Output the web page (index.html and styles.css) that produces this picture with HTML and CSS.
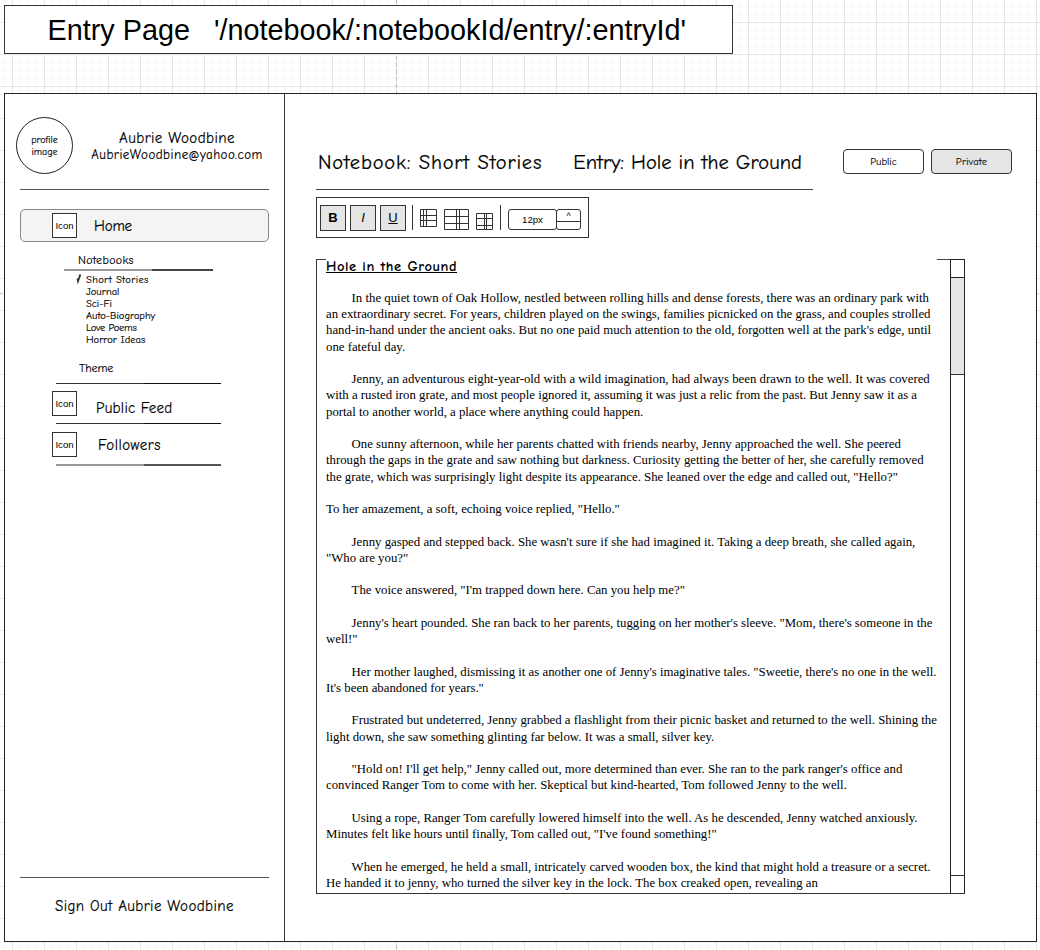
FILE: index.html
```html
<!DOCTYPE html>
<html lang="en">
<head>
<meta charset="utf-8">
<title>Entry Page</title>
<link rel="stylesheet" href="styles.css">
</head>
<body>
<div class="canvas">
<header class="route"><span class="route-name">Entry Page</span><span>'/notebook/:notebookId/entry/:entryId'</span></header>
<div class="frame">
  <aside class="sidebar">
    <div class="profile">
      <div class="avatar">profile<br>image</div>
      <div class="who"><div class="name">Aubrie Woodbine</div><div class="email">AubrieWoodbine@yahoo.com</div></div>
    </div>
    <div class="rule"></div>
    <div class="home"><span class="icon">Icon</span><span class="label label-home">Home</span></div>
    <div class="sub sub-notebooks">Notebooks</div>
    <div class="split split-notebooks"></div>
    <ul class="books">
      <li class="current"><svg class="tick" width="6" height="11" viewBox="0 0 6 11"><path d="M1.4 5.5L2 8.2L4.4 1.4" fill="none" stroke="#333" stroke-width="1.8"/></svg><span class="w-short">Short Stories</span></li>
      <li>Journal</li><li>Sci-Fi</li><li>Auto-Biography</li><li class="w-love">Love Poems</li><li>Horror Ideas</li>
    </ul>
    <div class="sub sub-theme">Theme</div>
    <div class="split"></div>
    <div class="item item-feed"><span class="icon">Icon</span><span class="label label-feed">Public Feed</span></div>
    <div class="split"></div>
    <div class="item item-followers"><span class="icon">Icon</span><span class="label label-followers">Followers</span></div>
    <div class="split split-soft"></div>
    <div class="rule rule-bottom"></div>
    <div class="signout">Sign Out Aubrie Woodbine</div>
  </aside>
  <main class="main">
    <div class="head">
      <div class="titles"><span class="t-book">Notebook: Short Stories</span><span class="t-entry">Entry: Hole in the Ground</span></div>
      <div class="visibility"><button class="vis">Public</button><button class="vis vis-on">Private</button></div>
    </div>
    <div class="toolbar">
      <button class="tool"><b>B</b></button><button class="tool"><i>I</i></button><button class="tool"><u>U</u></button>
      <span class="sep sep-a"></span>
      <svg class="grid-a" width="18" height="18" viewBox="0 0 18 18"><path d="M.5 .5H16.5V17.5H.5ZM3.5 .5V17.5M6.5 .5V17.5M.5 6.5H17M.5 11.5H17"/></svg>
      <svg class="grid-b" width="26" height="22" viewBox="0 0 26 22"><path d="M.5 .5H24.5V20.5H.5ZM12.5 .5V20.5M15.5 .5V20.5M.5 7.5H24.5M.5 14.5H24.5"/></svg>
      <svg class="grid-c" width="18" height="18" viewBox="0 0 18 18"><path d="M.5 .5H16.5V16.5H.5ZM8.5 .5V16.5M10.5 .5V16.5M.5 5.5H16.5M.5 12.5H16.5"/></svg>
      <span class="sep sep-b"></span>
      <span class="size">12px</span><span class="stepper"><span class="up">^</span><span class="down"></span></span>
    </div>
    <section class="editor">
      <article class="story">
        <h1>Hole in the Ground</h1>
        <p>In the quiet town of Oak Hollow, nestled between rolling hills and dense forests, there was an ordinary park with<br>an extraordinary secret. For years, children played on the swings, families picnicked on the grass, and couples strolled<br>hand-in-hand under the ancient oaks. But no one paid much attention to the old, forgotten well at the park's edge, until<br>one fateful day.</p>
        <p>Jenny, an adventurous eight-year-old with a wild imagination, had always been drawn to the well. It was covered<br>with a rusted iron grate, and most people ignored it, assuming it was just a relic from the past. But Jenny saw it as a<br>portal to another world, a place where anything could happen.</p>
        <p>One sunny afternoon, while her parents chatted with friends nearby, Jenny approached the well. She peered<br>through the gaps in the grate and saw nothing but darkness. Curiosity getting the better of her, she carefully removed<br>the grate, which was surprisingly light despite its appearance. She leaned over the edge and called out, "Hello?"</p>
        <p class="flush">To her amazement, a soft, echoing voice replied, "Hello."</p>
        <p>Jenny gasped and stepped back. She wasn't sure if she had imagined it. Taking a deep breath, she called again,<br>"Who are you?"</p>
        <p>The voice answered, "I'm trapped down here. Can you help me?"</p>
        <p>Jenny's heart pounded. She ran back to her parents, tugging on her mother's sleeve. "Mom, there's someone in the<br>well!"</p>
        <p>Her mother laughed, dismissing it as another one of Jenny's imaginative tales. "Sweetie, there's no one in the well.<br>It's been abandoned for years."</p>
        <p>Frustrated but undeterred, Jenny grabbed a flashlight from their picnic basket and returned to the well. Shining the<br>light down, she saw something glinting far below. It was a small, silver key.</p>
        <p>"Hold on! I'll get help," Jenny called out, more determined than ever. She ran to the park ranger's office and<br>convinced Ranger Tom to come with her. Skeptical but kind-hearted, Tom followed Jenny to the well.</p>
        <p>Using a rope, Ranger Tom carefully lowered himself into the well. As he descended, Jenny watched anxiously.<br>Minutes felt like hours until finally, Tom called out, "I've found something!"</p>
        <p>When he emerged, he held a small, intricately carved wooden box, the kind that might hold a treasure or a secret.<br>He handed it to jenny, who turned the silver key in the lock. The box creaked open, revealing an</p>
      </article>
      <div class="scroll"><div class="cap"></div><div class="thumb"></div><div class="track"></div><div class="cap-end"></div></div>
    </section>
  </main>
</div>
</div>
</body>
</html>
```
FILE: styles.css
```css
* { box-sizing: border-box; }
body { margin: 0; }
.canvas {
  width: 1040px; height: 950px; overflow: hidden;
  padding: 5px 0 0 4px;
  color: #000;
  font-family: "Comic Sans MS", "Comic Neue", Lato, sans-serif;
  background:
    repeating-linear-gradient(#bbb 0 4px, transparent 4px 7px) 396px 0 / 1px 100% no-repeat,
    repeating-linear-gradient(90deg, #ccc 0 3px, transparent 3px 7px) 0 293px / 100% 1px no-repeat,
    linear-gradient(90deg, #e6e6e6 1px, transparent 1px) 12px 0 / 32px 32px,
    linear-gradient(#e6e6e6 1px, transparent 1px) 0 22px / 32px 32px,
    linear-gradient(90deg, #f8f8f8 1px, transparent 1px) 4px 0 / 8px 8px,
    linear-gradient(#f8f8f8 1px, transparent 1px) 0 6px / 8px 8px,
    #fff;
}
.route {
  display: flex; align-items: center; gap: 24px;
  width: 729px; height: 49px; padding: 2px 0 0 42.5px;
  border: 1px solid #333; background: #fff;
  font: 28.8px/47px "Liberation Sans", Arial, sans-serif; white-space: nowrap;
}
.frame {
  display: grid; grid-template-columns: 280px 1fr;
  width: 1033px; height: 849px; margin-top: 39px;
  border: 1px solid #222; background: #fff;
}
.sidebar { display: flex; flex-direction: column; border-right: 1px solid #333; padding: 23px 15px 0; white-space: nowrap; -webkit-text-stroke: .15px #000; }
.profile { display: flex; margin-left: -4px; height: 57px; }
.avatar {
  width: 57px; height: 57px; border: 1px solid #222; border-radius: 50%;
  padding-top: 16px; text-align: center; font-size: 10px; line-height: 12px;
}
.who { flex: 1; padding-left: 12px; text-align: center; }
.name { margin-top: 13px; font-size: 15px; line-height: 17px; letter-spacing: .4px; }
.email { font-size: 13px; line-height: 16px; letter-spacing: .47px; }
.rule { height: 1px; flex: none; margin-top: 15px; background: #555; }
.home {
  display: flex; flex: none; height: 33px; margin-top: 19px; padding: 3px 0 0 31px;
  border: 1px solid #888; border-radius: 5px; background: #f4f4f4;
}
.icon {
  flex: none; width: 25px; height: 25px; border: 1px solid #333; background: #fff;
  font: 9.6px/23px "Liberation Sans", Arial, sans-serif; text-align: center;
  -webkit-text-stroke: 0;
}
.label { font-size: 15px; line-height: 25px; letter-spacing: .5px; }
.label-home { margin: 1px 0 0 17px; letter-spacing: -.2px; }
.sub { font-size: 12px; line-height: 16px; }
.sub-notebooks { margin: 10px 0 0 58px; letter-spacing: .3px; }
.split { flex: none; width: 165px; height: 1px; margin-left: 36px; background: linear-gradient(90deg, #333 88px, #111 88px); }
.split-notebooks { width: 149px; margin: 1px 0 0 44px; height: 2px; background: linear-gradient(90deg, #999 88px, #444 88px); }
.split-soft { height: 2px; background: linear-gradient(90deg, #999 88px, #555 88px); }
.books { list-style: none; margin: 3px 0 0 66px; padding: 0; font-size: 10.5px; line-height: 12px; }
.current { position: relative; }
.w-short { letter-spacing: .38px; }
.w-love { letter-spacing: -.2px; }
.tick { position: absolute; left: -10px; top: -1px; }
.sub-theme { margin: 14px 0 7px 59px; letter-spacing: -.1px; }
.item { display: flex; margin-left: 32px; flex: none; }
.item-feed { height: 39px; padding-top: 7px; }
.label-feed { margin: 5px 0 0 19px; letter-spacing: .25px; }
.item-followers { height: 40px; padding-top: 8px; }
.label-followers { margin: 1px 0 0 21px; }
.rule-bottom { margin-top: auto; }
.signout { height: 63px; padding-top: 18px; margin-left: 35px; font-size: 15px; line-height: 20px; letter-spacing: .4px; }

.main { padding: 54px 24px 0 31px; white-space: nowrap; }
.head { display: flex; justify-content: space-between; align-items: flex-start; height: 42px; -webkit-text-stroke: .2px #000; }
.titles { display: flex; gap: 31px; width: 497px; height: 42px; padding: 1px 0 0 2px; border-bottom: 1px solid #444; font-size: 20.5px; line-height: 28px; }
.t-book { letter-spacing: .8px; }
.t-entry { letter-spacing: .05px; }
.visibility { display: flex; gap: 7px; margin-top: 1px; -webkit-text-stroke: .1px #000; }
.vis { width: 81px; height: 25px; padding: 0; border: 1px solid #333; border-radius: 4px; background: #fff; font: 10.5px/22px "Comic Sans MS", "Comic Neue", Lato, sans-serif; color: #000; }
.vis-on { background: #e5e5e5; letter-spacing: .2px; }
.toolbar { display: flex; width: 273px; height: 41px; margin-top: 7px; padding: 7px 3px; border: 1px solid #333; }
.toolbar > * { flex: none; }
.tool { width: 26px; height: 26px; margin-right: 4px; padding: 0; border: 1px solid #333; background: #e5e5e5; font: 13px/22px "Liberation Sans", Arial, sans-serif; color: #000; }
.toolbar svg { fill: none; stroke: #333; }
.sep { width: 1px; height: 25px; background: #333; }
.sep-a { margin-left: 2px; }
.grid-a { margin: 4px 0 0 7px; }
.grid-b { margin: 4px 0 0 6px; }
.grid-c { margin: 8px 0 0 6px; }
.sep-b { margin-left: 6px; }
.size { width: 49px; height: 21px; margin: 4px 0 0 7px; border: 1px solid #333; border-radius: 3px; font: 9.6px/20px "Liberation Sans", Arial, sans-serif; text-align: center; }
.stepper { width: 25px; height: 21px; margin: 4px 0 0 -1px; border: 1px solid #333; border-radius: 3px; }
.up { display: block; height: 12px; border-bottom: 1px solid #333; font: 9px/12px "Liberation Sans", Arial, sans-serif; text-align: center; }
.editor {
  display: flex; width: 649px; height: 635px; margin-top: 21px;
  border-left: 1px solid #333; border-bottom: 1px solid #333;
  background: linear-gradient(#444, #444) 0 0 / 9px 1px no-repeat, linear-gradient(#444, #444) 620px 0 / 28px 1px no-repeat;
}
.story { width: 633px; padding-left: 9px; font: 12.8px/16.25px "Liberation Serif", "Times New Roman", serif; }
.story h1 { margin: 0 0 -1.7px; font: bold 14.5px/16.25px "Comic Sans MS", "Comic Neue", Lato, sans-serif; letter-spacing: .55px; text-decoration: underline; }
.story p { margin: 16.25px 0 0; text-indent: 25.6px; }
.story .flush { text-indent: 0; }
.scroll { display: flex; flex-direction: column; width: 15px; border: solid #222; border-width: 1px 1px 0; }
.cap { height: 18px; border-bottom: 1px solid #222; }
.thumb { height: 97px; background: #e5e5e5; border-bottom: 1px solid #333; }
.track { flex: 1; }
.cap-end { height: 18px; border-top: 1px solid #333; }
```
